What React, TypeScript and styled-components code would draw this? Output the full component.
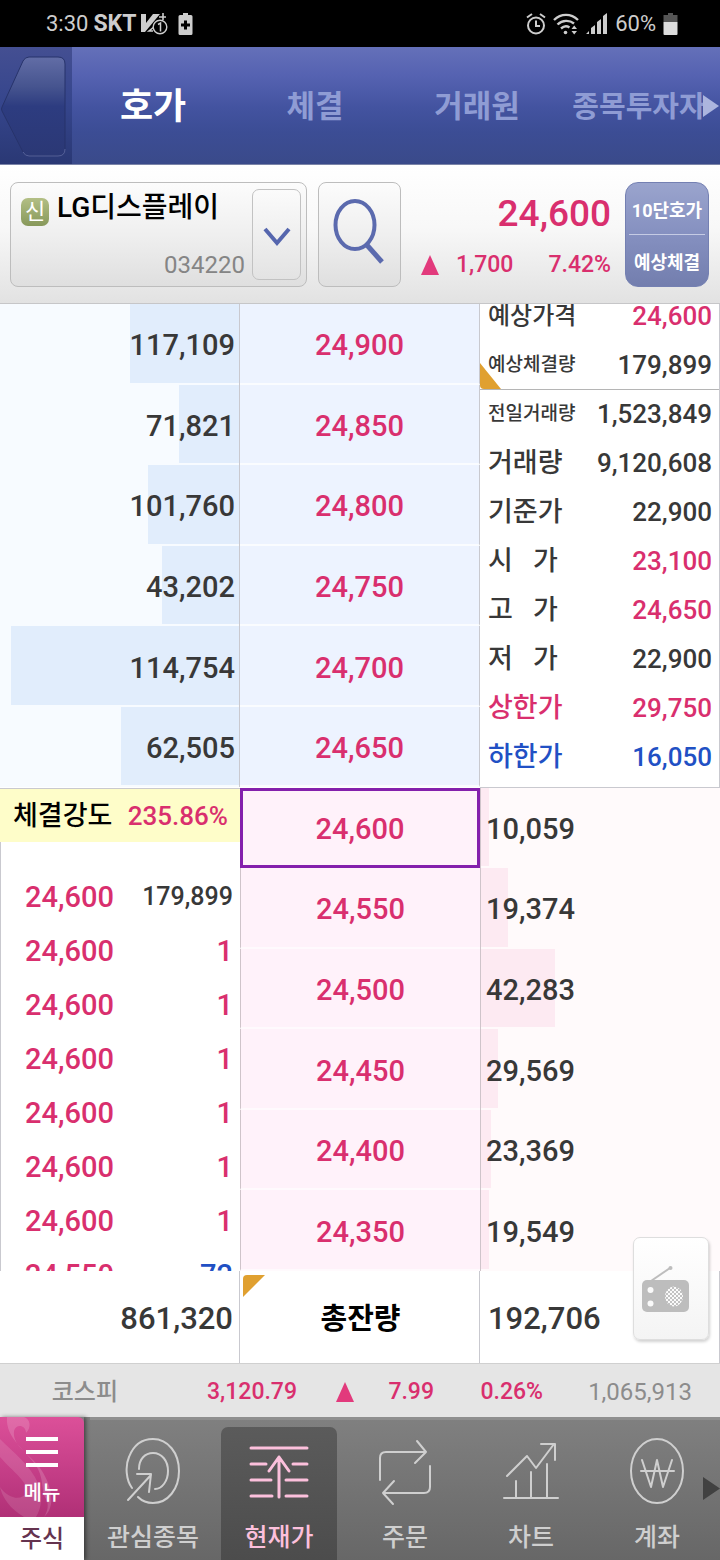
import React from 'react';
import styled, { createGlobalStyle, css } from 'styled-components';

type Tone = 'up' | 'down' | 'flat';

const color = {
  up: '#d92f6e',
  down: '#2150c4',
  flat: '#383838',
  line: '#c9c9cf',
};

const GlobalStyle = createGlobalStyle`
  *, *::before, *::after { box-sizing: border-box; }
  html, body { margin: 0; padding: 0; background: #fff; }
  body {
    font-family: Roboto, 'Noto Sans CJK KR', sans-serif;
    font-weight: 500;
    color: ${color.flat};
  }
  button {
    margin: 0;
    padding: 0;
    border: 0;
    background: none;
    font: inherit;
    color: inherit;
    cursor: pointer;
  }
  svg { display: block; flex: none; }
`;

const Screen = styled.div`
  display: flex;
  flex-direction: column;
  height: 100vh;
  overflow: hidden;
`;

/* ---------- status bar ---------- */

const StatusBar = styled.div`
  display: flex;
  align-items: center;
  justify-content: space-between;
  flex: none;
  height: 47px;
  padding: 0 42px 0 46px;
  background: #000;
  color: #cdcdcd;
  font-size: 22px;
  line-height: 26px;
  font-weight: 400;
`;

const StatusGroup = styled.div<{ $gap: number }>`
  display: flex;
  align-items: center;
  gap: ${(p) => p.$gap}px;

  b { font-weight: 700; font-size: 23px; }
`;

/* ---------- tab header ---------- */

const Header = styled.header`
  position: relative;
  display: flex;
  flex: none;
  height: 118px;
  background: linear-gradient(#6470b9 0%, #5562b1 25%, #4353a0 52%, #3c4d95 72%, #3a4a8a 100%);
  border-bottom: 1px solid #7b84a8;
`;

const BackButton = styled.button`
  flex: none;
  width: 72px;
  background: linear-gradient(#444f92, #35458c 50%, #2a3874);
`;

const Tabs = styled.nav`
  display: flex;
  flex: 1;
`;

const Tab = styled.button<{ $active?: boolean; $long?: boolean }>`
  flex: 1 1 0;
  min-width: 0;
  padding-top: 3px;
  white-space: nowrap;
  font-size: ${(p) => (p.$active ? 36 : p.$long ? 29 : 31)}px;
  line-height: 44px;
  color: ${(p) => (p.$active ? '#fff' : '#8f9cd4')};
  font-weight: 700;
`;

const TabsMore = styled.svg`
  position: absolute;
  right: 1px;
  top: 48px;
`;

/* ---------- stock summary ---------- */

const StockBar = styled.section`
  display: flex;
  flex: none;
  height: 139px;
  padding: 17px 11px 16px 10px;
  background: linear-gradient(#fff, #f8f8f8 45%, #e2e2e2);
  border-bottom: 1px solid #c6c6c8;
`;

const boxed = css`
  border: 1px solid #bdbdbd;
  border-radius: 8px;
  background: linear-gradient(#fcfcfc, #efefef 50%, #dfdfdf);
`;

const StockPicker = styled.div`
  ${boxed}
  display: flex;
  flex: 1;
  min-width: 0;
  padding: 6px 5px;
`;

const StockButton = styled.button`
  display: flex;
  flex: 1;
  flex-direction: column;
  justify-content: space-between;
  min-width: 0;
  padding: 1px 7px 0 5px;
`;

const StockName = styled.span`
  display: flex;
  align-items: center;
  gap: 8px;
  font-size: 28px;
  line-height: 36px;
  color: #000;
  white-space: nowrap;
`;

const Badge = styled.span`
  width: 28px;
  height: 28px;
  margin-top: 7px;
  border-radius: 7px;
  background: linear-gradient(#b3bf85, #87985a);
  color: #fff;
  font-size: 22px;
  line-height: 28px;
  font-weight: 400;
  text-align: center;
`;

const StockCode = styled.span`
  align-self: flex-end;
  font-size: 24px;
  line-height: 30px;
  font-weight: 400;
  color: #858585;
`;

const DropButton = styled.button`
  display: flex;
  align-items: center;
  justify-content: center;
  width: 49px;
  padding-top: 2px;
  border: 1px solid #c2c2c2;
  border-radius: 7px;
  background: linear-gradient(#fbfbfb, #e3e3e3);
`;

const SearchButton = styled.button`
  ${boxed}
  display: flex;
  align-items: center;
  justify-content: center;
  width: 83px;
  padding-bottom: 6px;
  margin-left: 11px;
`;

const Quote = styled.div`
  display: flex;
  flex-direction: column;
  align-items: flex-end;
  justify-content: space-between;
  width: 224px;
  padding: 9px 14px 6px 20px;
  color: ${color.up};
`;

const QuotePrice = styled.strong`
  font-size: 37px;
  line-height: 46px;
  font-weight: 500;
`;

const QuoteChange = styled.div`
  display: flex;
  align-items: center;
  justify-content: space-between;
  width: 100%;
  font-size: 23px;
  line-height: 32px;

  span:last-child { margin-left: 18px; }
`;

const ModeSwitch = styled.div`
  display: flex;
  flex-direction: column;
  width: 84px;
  padding: 0 3px;
  border: 1px solid #7480b2;
  border-radius: 13px;
  background: linear-gradient(#9aa4cd, #8590c0 50%, #737eae);
`;

const ModeButton = styled.button`
  flex: 1;
  color: #fff;
  font-size: 18px;
  font-weight: 700;
  white-space: nowrap;

  & + & { border-top: 1px solid #c5cbe4; }
`;

/* ---------- order book ---------- */

const Book = styled.main`
  display: grid;
  flex: 1;
  min-height: 0;
  grid-template-columns: repeat(3, minmax(0, 1fr));
  grid-template-rows: repeat(2, minmax(0, 1fr));
`;

const Ladder = styled.table`
  display: flex;
  flex-direction: column;
  grid-column: span 2;
  min-height: 0;
  font-size: 29px;
  line-height: 36px;

  tbody { display: contents; }
`;

const LadderRow = styled.tr`
  display: grid;
  flex: 1 1 0;
  min-height: 0;
  grid-template-columns: 1fr 1fr;
`;

const cell = css`
  display: flex;
  align-items: center;
  padding: 2px 0 0;
`;

const AskQty = styled.td`
  ${cell}
  justify-content: flex-end;
  padding-right: 4px;
  border-right: 1px solid ${color.line};
  background: linear-gradient(#e1edfc, #e1edfc) right top no-repeat #f7fbff;
`;

const BidQty = styled.td`
  ${cell}
  padding-left: 5px;
  border-left: 1px solid #cfc4ca;
  background: linear-gradient(#fdeaf2, #fdeaf2) left top no-repeat #fffafb;
`;

const Price = styled.td<{ $side: 'ask' | 'bid'; $current?: boolean }>`
  ${cell}
  justify-content: center;
  padding-top: 4px;
  color: ${color.up};
  ${(p) =>
    p.$side === 'ask'
      ? css`
          background: #edf3ff;
          border-right: 1px solid ${color.line};
          border-bottom: 2px solid #fafcff;
        `
      : css`
          background: #fff2fa;
          border-left: 1px solid #cfc4ca;
          border-bottom: 2px solid #fffafd;
        `}
  ${(p) =>
    p.$current &&
    css`
      padding-top: 2px;
      border: 3px solid #8420ac;
    `}
`;

const InfoPanel = styled.dl`
  display: flex;
  flex-direction: column;
  justify-content: flex-end;
  min-height: 0;
  margin: 0;
  padding-bottom: 5px;
  overflow: hidden;
  border-right: 1px solid ${color.line};
  border-bottom: 1px solid ${color.line};
  background: #fff;
`;

const InfoRow = styled.div<{ $tone: Tone; $ruled?: boolean }>`
  position: relative;
  display: flex;
  align-items: center;
  justify-content: space-between;
  flex: none;
  height: 49px;
  padding: 0 7px 0 8px;
  color: ${(p) => color[p.$tone]};
  font-size: 26px;
  line-height: 36px;
  white-space: pre;
  ${(p) => p.$ruled && css`border-bottom: 1px solid #b5b5b5;`}

  dd { margin: 0; }
`;

const InfoLabel = styled.dt<{ $size: number; $tone: Tone }>`
  font-size: ${(p) => p.$size}px;
  color: ${(p) => color[p.$tone]};
`;

const RowMark = styled.svg`
  position: absolute;
  left: 0;
  bottom: 0;
`;

const TradePanel = styled.section`
  display: flex;
  flex-direction: column;
  min-height: 0;
  overflow: hidden;
  background: #fff;
`;

const Strength = styled.div`
  display: flex;
  align-items: center;
  justify-content: space-between;
  flex: none;
  height: 54px;
  padding: 2px 12px 0 13px;
  border-top: 1px solid ${color.line};
  background: #fefdc9;
  color: #000;
  font-size: 26px;
  line-height: 36px;

  span:first-child { font-size: 27px; }
  span:last-child { color: ${color.up}; }
`;

const Trades = styled.table`
  display: block;
  flex: 1;
  padding: 28px 7px 0 24px;
  border-left: 1px solid ${color.line};

  tbody { display: block; }
`;

const TradeRow = styled.tr`
  display: flex;
  align-items: center;
  justify-content: space-between;
  height: 54px;
`;

const TradeCell = styled.td<{ $tone: Tone; $wide?: boolean }>`
  padding: 0;
  font-size: ${(p) => (p.$wide ? 25 : 29)}px;
  line-height: 36px;
  color: ${(p) => color[p.$tone]};
`;

/* ---------- totals ---------- */

const Totals = styled.section`
  position: relative;
  display: grid;
  flex: none;
  grid-template-columns: repeat(3, minmax(0, 1fr));
  height: 93px;
  border-bottom: 1px solid #d0d0d0;
  background: #fff;
  font-size: 31px;
  line-height: 40px;
`;

const TotalCell = styled.div<{ $align: string }>`
  position: relative;
  display: flex;
  align-items: center;
  justify-content: ${(p) => p.$align};
  padding: 3px 6px 0 8px;
  border-right: 1px solid ${color.line};
`;

const TotalLabel = styled.span`
  font-size: 29px;
  font-weight: 700;
  color: #000;
`;

const CornerMark = styled.svg`
  position: absolute;
  left: 3px;
  top: 4px;
`;

const RadioButton = styled.button`
  position: absolute;
  right: 11px;
  bottom: 23px;
  display: flex;
  align-items: center;
  width: 76px;
  height: 103px;
  padding: 0 0 0 8px;
  border: 1px solid #dedede;
  border-radius: 7px;
  background: linear-gradient(rgba(255, 255, 255, 0.95), #f4f4f4);
  box-shadow: 1px 2px 3px rgba(0, 0, 0, 0.18);
`;

/* ---------- market index ---------- */

const IndexBar = styled.section`
  display: grid;
  grid-template-columns: 118fr 179fr 57fr 80fr 109fr 149fr;
  align-items: center;
  justify-items: end;
  flex: none;
  height: 53px;
  padding: 2px 28px 0 0;
  background: #e5e5e5;
  color: ${color.up};
  font-size: 23px;
  line-height: 32px;
`;

const IndexName = styled.span`
  font-size: 24px;
  color: #8c8c8c;
`;

const IndexVolume = styled.span`
  font-size: 24px;
  font-weight: 400;
  color: #8c8c8c;
`;

/* ---------- bottom navigation ---------- */

const BottomNav = styled.nav`
  position: relative;
  display: flex;
  flex: none;
  height: 143px;
  background: linear-gradient(#808080, #676767);
`;

const MenuColumn = styled.div`
  display: flex;
  flex: none;
  flex-direction: column;
  width: 84px;
  margin-right: 6px;
  box-shadow: 2px 0 4px rgba(0, 0, 0, 0.45);
`;

const MenuButton = styled.button`
  position: relative;
  display: flex;
  flex-direction: column;
  align-items: center;
  height: 100px;
  padding-top: 20px;
  overflow: hidden;
  border-top-right-radius: 6px;
  background: linear-gradient(#dc5099, #c23c85 60%, #b03076);
  color: #fff;
  font-size: 20px;
  line-height: 26px;
`;

const MenuSwirl = styled.svg`
  position: absolute;
  left: 0;
  top: 0;
`;

const MenuFace = styled.span`
  position: relative;
  display: flex;
  flex-direction: column;
  align-items: center;
  gap: 13px;
`;

const MarketButton = styled.button`
  flex: 1;
  background: #fff;
  color: #65334f;
  font-size: 24px;
  line-height: 32px;
`;

const NavItems = styled.div`
  display: flex;
  flex: 1;
  border-top: 3px solid #8f8f8f;
`;

const NavItem = styled.button<{ $active?: boolean }>`
  display: flex;
  flex: 1 1 0;
  flex-direction: column;
  align-items: center;
  justify-content: space-between;
  min-width: 0;
  margin: 7px 5px 0;
  padding: 11px 0 5px;
  border-radius: 7px 7px 0 0;
  color: ${(p) => (p.$active ? '#fcc0dc' : '#cfcfcf')};
  background: ${(p) => (p.$active ? 'linear-gradient(#5b5b5b, #4c4c4c)' : 'none')};
  font-size: 25px;
  line-height: 34px;
  white-space: nowrap;

  svg {
    fill: none;
    stroke: currentColor;
    stroke-width: ${(p) => (p.$active ? 3 : 2)};
    stroke-linecap: round;
    stroke-linejoin: round;
  }
`;

const NavMore = styled.svg`
  position: absolute;
  right: 0;
  top: 60px;
`;

/* ---------- data ---------- */

const asks = [
  { qty: '117,109', price: '24,900', bar: 109 },
  { qty: '71,821', price: '24,850', bar: 60 },
  { qty: '101,760', price: '24,800', bar: 91 },
  { qty: '43,202', price: '24,750', bar: 77 },
  { qty: '114,754', price: '24,700', bar: 228 },
  { qty: '62,505', price: '24,650', bar: 118 },
];

const bids = [
  { qty: '10,059', price: '24,600', bar: 8 },
  { qty: '19,374', price: '24,550', bar: 27 },
  { qty: '42,283', price: '24,500', bar: 74 },
  { qty: '29,569', price: '24,450', bar: 17 },
  { qty: '23,369', price: '24,400', bar: 10 },
  { qty: '19,549', price: '24,350', bar: 8 },
];

const BAR_SCALE = 239;

const info: { label: string; value: string; tone: Tone; labelTone?: Tone; size?: number; ruled?: boolean }[] = [
  { label: '예상가격', value: '24,600', tone: 'up', labelTone: 'flat', size: 24 },
  { label: '예상체결량', value: '179,899', tone: 'flat', size: 19, ruled: true },
  { label: '전일거래량', value: '1,523,849', tone: 'flat', size: 19 },
  { label: '거래량', value: '9,120,608', tone: 'flat' },
  { label: '기준가', value: '22,900', tone: 'flat' },
  { label: '시   가', value: '23,100', tone: 'up', labelTone: 'flat' },
  { label: '고   가', value: '24,650', tone: 'up', labelTone: 'flat' },
  { label: '저   가', value: '22,900', tone: 'flat' },
  { label: '상한가', value: '29,750', tone: 'up' },
  { label: '하한가', value: '16,050', tone: 'down' },
];

const trades: { price: string; qty: string; tone: Tone; wide?: boolean }[] = [
  { price: '24,600', qty: '179,899', tone: 'flat', wide: true },
  { price: '24,600', qty: '1', tone: 'up' },
  { price: '24,600', qty: '1', tone: 'up' },
  { price: '24,600', qty: '1', tone: 'up' },
  { price: '24,600', qty: '1', tone: 'up' },
  { price: '24,600', qty: '1', tone: 'up' },
  { price: '24,600', qty: '1', tone: 'up' },
  { price: '24,550', qty: '72', tone: 'down' },
];

const barSize = (bar: number) => ({
  backgroundSize: `${(bar / BAR_SCALE) * 100}% calc(100% - 2px)`,
});

/* ---------- icons ---------- */

const UpTriangle = () => (
  <svg width="18" height="20" viewBox="0 0 18 20" aria-hidden="true">
    <path d="M9 0 18 20H0z" fill="#e23a7c" />
  </svg>
);

const CarrierIcon = () => (
  <svg width="32" height="22" viewBox="0 0 32 22" aria-hidden="true">
    <path d="M0 1h5v9l7-9h7L4 19H0z" fill="#cdcdcd" />
    <path d="M13 14l-5 4h4M22 0v7M18 4h7" stroke="#cdcdcd" strokeWidth="1.6" fill="none" />
    <circle cx="19" cy="14" r="6.8" fill="#000" stroke="#cdcdcd" strokeWidth="1.4" />
    <path d="M17 11.500l2.500-1.500v8.500" stroke="#cdcdcd" strokeWidth="1.500" fill="none" />
  </svg>
);

const BatteryPlusIcon = () => (
  <svg width="15" height="22" viewBox="0 0 15 22" aria-hidden="true">
    <path d="M5 0h5v2h3a1.500 1.500 0 0 1 1.500 1.500v17A1.500 1.500 0 0 1 13 22H2a1.500 1.500 0 0 1-1.500-1.500v-17A1.500 1.500 0 0 1 2 2h3z" fill="#cdcdcd" />
    <path d="M7.500 7.500v9M3 12h9" stroke="#000" strokeWidth="3" />
  </svg>
);

const AlarmIcon = () => (
  <svg width="20" height="22" viewBox="0 0 20 22" fill="none" stroke="#cdcdcd" strokeWidth="2" aria-hidden="true">
    <circle cx="10" cy="12.500" r="8" />
    <path d="M10 7.500v5.500h4M1 4.500 6 1M19 4.500 14 1" />
  </svg>
);

const WifiIcon = () => (
  <svg width="26" height="22" viewBox="0 0 26 22" fill="none" stroke="#cdcdcd" strokeWidth="2.400" aria-hidden="true">
    <path d="M1 7C8 .2 18 .2 25 7M4.500 11.500c5-4.700 12-4.700 16.500-1M8 15.500c3-2.700 6-2.700 8.500-1" />
    <circle cx="12.500" cy="19.500" r="1.800" fill="#cdcdcd" stroke="none" />
    <path d="M18.500 16 21.200 12.500 24 16zM18.500 18h5.500l-2.800 3.500z" fill="#cdcdcd" stroke="none" />
  </svg>
);

const SignalIcon = () => (
  <svg width="22" height="21" viewBox="0 0 22 21" fill="#cdcdcd" aria-hidden="true">
    <path d="M0 21l3-3v3zM5 21v-6l4-3V21zM11 21V9l4-3V21zM17 21V3l4-3v21z" />
  </svg>
);

const BatteryIcon = () => (
  <svg width="15" height="22" viewBox="0 0 15 22" aria-hidden="true">
    <path d="M5 0h5v2h4.500v7H.5V2H5z" fill="#555" />
    <path d="M.5 9h14v12a1 1 0 0 1-1 1h-12a1 1 0 0 1-1-1z" fill="#dcdcdc" />
  </svg>
);

const BackShape = () => (
  <svg width="72" height="117" viewBox="0 0 72 117" aria-hidden="true">
    <defs>
      <linearGradient id="back" x1="0" y1="0" x2="0" y2="1">
        <stop offset="0" stopColor="#626da6" />
        <stop offset="0.3" stopColor="#46548f" />
        <stop offset="0.5" stopColor="#2d3c80" />
        <stop offset="1" stopColor="#2b3875" />
      </linearGradient>
    </defs>
    <path
      d="M2 60 23 14q2-4 6-4h29q7 0 7 7v85q0 7-7 7H29q-4 0-6-4L2 64q-1-2 0-4z"
      fill="url(#back)"
      stroke="#27336b"
    />
    <path d="M23 105q2 4 6 4h29q7 0 7-7" fill="none" stroke="#56629b" />
  </svg>
);

const SearchIcon = () => (
  <svg width="54" height="68" viewBox="0 0 54 68" fill="none" stroke="#5b6aae" aria-hidden="true">
    <ellipse cx="22" cy="27" rx="19.500" ry="24" strokeWidth="4" />
    <path d="M33 46 49 64" strokeWidth="5" />
  </svg>
);

const RadioIcon = () => (
  <svg width="48" height="48" viewBox="0 0 48 48" aria-hidden="true">
    <defs>
      <pattern id="mesh" width="4" height="4" patternUnits="userSpaceOnUse">
        <rect width="4" height="4" fill="#fafafa" />
        <rect width="2" height="2" fill="#c2c2c2" />
        <rect x="2" y="2" width="2" height="2" fill="#c2c2c2" />
      </pattern>
    </defs>
    <path d="M9 16 28 3" stroke="#bdbdbd" strokeWidth="2" />
    <circle cx="28.500" cy="3" r="2" fill="#bdbdbd" />
    <rect x="0" y="15" width="47" height="32" rx="5" fill="#bdbdbd" />
    <circle cx="8.500" cy="25" r="3" fill="#fafafa" />
    <circle cx="8.500" cy="38.500" r="3" fill="#fafafa" />
    <ellipse cx="32" cy="31.500" rx="9" ry="10" fill="url(#mesh)" />
  </svg>
);

const WatchIcon = () => (
  <svg width="56" height="68" viewBox="0 0 56 68" aria-hidden="true">
    <path d="M7 50C1 42 0 28 4 19 9 6 18 1 28 1c15 0 26 14 26 32S43 65 28 65c-6 0-11-2-15-6" />
    <path d="M14 31c0-10 6-16 14-16 9 0 15 8 15 18s-6 18-13 18" />
    <path d="M3 62 26 37M12 36h14l-2 18" />
  </svg>
);

const QuoteIcon = () => (
  <svg width="60" height="68" viewBox="0 0 60 68" aria-hidden="true">
    <path d="M2 10h56M2 26h15M44 26h14M2 42h20M37 42h21M2 58h21M37 58h21M30 59V19M20 33 30 19 40 33" />
  </svg>
);

const OrderIcon = () => (
  <svg width="54" height="68" viewBox="0 0 54 68" aria-hidden="true">
    <path d="M2 42V20q0-6 6-6h40M39 3l9 11-11 11M52 28v21q0 6-6 6H5M16 43 5 55l10 11" />
  </svg>
);

const ChartIcon = () => (
  <svg width="58" height="68" viewBox="0 0 58 68" aria-hidden="true">
    <path d="M2 60h54M14 43v17M29 34v26M45 26v34M5 38 25 18l9 12L52 6M39 6h14v16" />
  </svg>
);

const AccountIcon = () => (
  <svg width="56" height="68" viewBox="0 0 56 68" aria-hidden="true">
    <ellipse cx="28" cy="33" rx="26" ry="32" />
    <path d="M13 22l9 27 6-27 6 27 9-27M12 33h33" />
  </svg>
);

const navItems = [
  { label: '관심종목', Icon: WatchIcon },
  { label: '현재가', Icon: QuoteIcon, active: true },
  { label: '주문', Icon: OrderIcon },
  { label: '차트', Icon: ChartIcon },
  { label: '계좌', Icon: AccountIcon },
];

export default function App() {
  return (
    <>
      <GlobalStyle />
      <Screen>
        <StatusBar>
          <StatusGroup $gap={5}>
            <span>3:30</span>
            <b>SKT</b>
            <CarrierIcon />
            <BatteryPlusIcon />
          </StatusGroup>
          <StatusGroup $gap={7}>
            <AlarmIcon />
            <WifiIcon />
            <SignalIcon />
            <span>60%</span>
            <BatteryIcon />
          </StatusGroup>
        </StatusBar>

        <Header>
          <BackButton aria-label="뒤로">
            <BackShape />
          </BackButton>
          <Tabs>
            <Tab $active>호가</Tab>
            <Tab>체결</Tab>
            <Tab>거래원</Tab>
            <Tab $long>종목투자자</Tab>
          </Tabs>
          <TabsMore width="16" height="22" viewBox="0 0 16 22" aria-hidden="true">
            <path d="M0 0 16 11 0 22z" fill="#acb5de" />
          </TabsMore>
        </Header>

        <StockBar>
          <StockPicker>
            <StockButton>
              <StockName>
                <Badge>신</Badge>
                LG디스플레이
              </StockName>
              <StockCode>034220</StockCode>
            </StockButton>
            <DropButton aria-label="종목 목록" aria-haspopup="listbox">
              <svg width="28" height="22" viewBox="0 0 28 22" aria-hidden="true">
                <path d="M2 4 14 18 26 4" fill="none" stroke="#5566ae" strokeWidth="4" />
              </svg>
            </DropButton>
          </StockPicker>
          <SearchButton aria-label="종목 검색">
            <SearchIcon />
          </SearchButton>
          <Quote>
            <QuotePrice>24,600</QuotePrice>
            <QuoteChange>
              <UpTriangle />
              <span>1,700</span>
              <span>7.42%</span>
            </QuoteChange>
          </Quote>
          <ModeSwitch>
            <ModeButton>10단호가</ModeButton>
            <ModeButton>예상체결</ModeButton>
          </ModeSwitch>
        </StockBar>

        <Book>
          <Ladder>
            <tbody>
              {asks.map((row) => (
                <LadderRow key={row.price}>
                  <AskQty style={barSize(row.bar)}>{row.qty}</AskQty>
                  <Price $side="ask">{row.price}</Price>
                </LadderRow>
              ))}
            </tbody>
          </Ladder>

          <InfoPanel>
            {info.map((row) => (
              <InfoRow key={row.label} $tone={row.tone} $ruled={row.ruled}>
                {row.ruled && (
                  <RowMark width="21" height="26" viewBox="0 0 21 26" aria-hidden="true">
                    <path d="M0 0 21 26H4q-4 0-4-4z" fill="#e0a030" />
                  </RowMark>
                )}
                <InfoLabel $size={row.size ?? 27} $tone={row.labelTone ?? row.tone}>
                  {row.label}
                </InfoLabel>
                <dd>{row.value}</dd>
              </InfoRow>
            ))}
          </InfoPanel>

          <TradePanel>
            <Strength>
              <span>체결강도</span>
              <span>235.86%</span>
            </Strength>
            <Trades>
              <tbody>
                {trades.map((row, i) => (
                  <TradeRow key={i}>
                    <TradeCell $tone="up">{row.price}</TradeCell>
                    <TradeCell $tone={row.tone} $wide={row.wide}>
                      {row.qty}
                    </TradeCell>
                  </TradeRow>
                ))}
              </tbody>
            </Trades>
          </TradePanel>

          <Ladder>
            <tbody>
              {bids.map((row, i) => (
                <LadderRow key={row.price}>
                  <Price $side="bid" $current={i === 0}>
                    {row.price}
                  </Price>
                  <BidQty style={barSize(row.bar)}>{row.qty}</BidQty>
                </LadderRow>
              ))}
            </tbody>
          </Ladder>
        </Book>

        <Totals>
          <TotalCell $align="flex-end">861,320</TotalCell>
          <TotalCell $align="center">
            <CornerMark width="22" height="22" viewBox="0 0 22 22" aria-hidden="true">
              <path d="M0 22V4q0-4 4-4h18z" fill="#e0a030" />
            </CornerMark>
            <TotalLabel>총잔량</TotalLabel>
          </TotalCell>
          <TotalCell $align="flex-start">192,706</TotalCell>
          <RadioButton aria-label="라디오">
            <RadioIcon />
          </RadioButton>
        </Totals>

        <IndexBar>
          <IndexName>코스피</IndexName>
          <span>3,120.79</span>
          <UpTriangle />
          <span>7.99</span>
          <span>0.26%</span>
          <IndexVolume>1,065,913</IndexVolume>
        </IndexBar>

        <BottomNav>
          <MenuColumn>
            <MenuButton>
              <MenuSwirl width="84" height="100" viewBox="0 0 84 100" aria-hidden="true">
                <path
                  d="M7 0C5 22 28 34 38 52c6 12 3 22 8 30 3 5 2 12-2 18 12-10 8-30-2-46C32 38 12 30 14 14 16 6 26 8 26 16c6-6 4-14-2-16z"
                  fill="#fff"
                  opacity="0.16"
                />
                <path d="M0 22c14 14 30 26 38 44 5 12 4 24-2 34H24C10 92 2 80 0 70c8 12 22 14 26 6 4-10-14-22-26-36z" fill="#fff" opacity="0.12" />
              </MenuSwirl>
              <MenuFace>
                <svg width="32" height="30" viewBox="0 0 32 30" aria-hidden="true">
                  <path d="M0 2h32M0 15h32M0 28h32" stroke="#fff" strokeWidth="4" />
                </svg>
                메뉴
              </MenuFace>
            </MenuButton>
            <MarketButton>주식</MarketButton>
          </MenuColumn>
          <NavItems>
            {navItems.map(({ label, Icon, active }) => (
              <NavItem key={label} $active={active}>
                <Icon />
                {label}
              </NavItem>
            ))}
          </NavItems>
          <NavMore width="17" height="23" viewBox="0 0 17 23" aria-hidden="true">
            <path d="M0 0 17 11.500 0 23z" fill="#414141" />
          </NavMore>
        </BottomNav>
      </Screen>
    </>
  );
}
